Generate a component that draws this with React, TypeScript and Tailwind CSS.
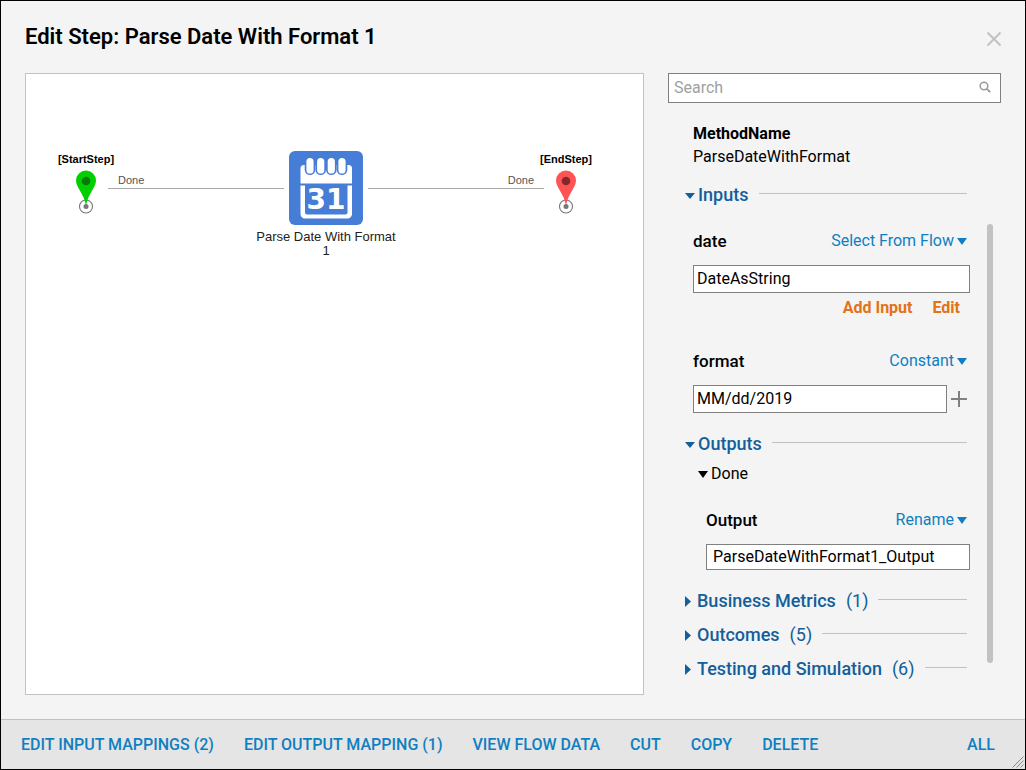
import { useState } from "react";
import type { ReactNode } from "react";

const footerActions = [
  "EDIT INPUT MAPPINGS (2)",
  "EDIT OUTPUT MAPPING (1)",
  "VIEW FLOW DATA",
  "CUT",
  "COPY",
  "DELETE",
];

function CaretDown({ className = "" }: { className?: string }) {
  return (
    <svg viewBox="0 0 10 6" preserveAspectRatio="none" className={`shrink-0 fill-current ${className}`} aria-hidden="true">
      <path d="M0 0h10L5 6z" />
    </svg>
  );
}

function CaretRight() {
  return (
    <svg viewBox="0 0 6 10" preserveAspectRatio="none" className="mr-[6px] h-[11px] w-[6px] shrink-0 fill-current" aria-hidden="true">
      <path d="M0 0v10L6 5z" />
    </svg>
  );
}

interface SectionProps {
  title: string;
  count?: number;
  open?: boolean;
}

function SectionHeader({ title, count, open = false }: SectionProps) {
  return (
    <div className="flex h-6 items-center pr-[3px]">
      <button type="button" aria-expanded={open} className="flex items-center text-lg leading-6 font-medium whitespace-nowrap text-[#135f9b]">
        {open ? <CaretDown className="mt-[2px] mr-[3px] h-[6px] w-[10px]" /> : <CaretRight />}
        {title}
        {count !== undefined && <span className="ml-[10px] font-normal">({count})</span>}
      </button>
      <span className="mb-[3px] ml-[10px] h-px flex-1 bg-[#c2c2c2]" />
    </div>
  );
}

function FieldHeader({ id, label, action }: { id: string; label: string; action: string }) {
  return (
    <div className="flex h-6 items-center justify-between pr-[3px]">
      <label htmlFor={id} className="text-[17px] leading-6 font-medium">{label}</label>
      <button type="button" className="flex items-center gap-[3px] text-[#0f7fc1]">
        {action}
        <CaretDown className="h-[7px] w-[10px]" />
      </button>
    </div>
  );
}

function Pin({ color, dot }: { color: string; dot: string }) {
  return (
    <svg width="22" height="44" viewBox="0 0 22 44" className="mt-[3px]" aria-hidden="true">
      <circle cx="11" cy="36.500" r="6.500" fill="none" stroke="#777" strokeWidth="1.100" />
      <path d="M11 0.500a10 10 0 0 0-10 10c0 3.600 1.800 6.500 4 10.200C7.800 25.500 9.600 29 10.600 34h0.800c1-5 2.800-8.500 5.600-13.300 2.200-3.700 4-6.600 4-10.200a10 10 0 0 0-10-10z" fill={color} />
      <circle cx="11" cy="11" r="4.300" fill={dot} />
      <circle cx="11" cy="36.500" r="2.500" fill="#777" />
    </svg>
  );
}

function CalendarIcon() {
  return (
    <svg width="74" height="74" viewBox="0 0 74 74" aria-hidden="true">
      <rect width="74" height="74" rx="6" fill="#467dd7" />
      <path d="M11.500 32.500V17.500a3.500 3.500 0 0 1 3.500-3.500h44.500a3.500 3.500 0 0 1 3.500 3.500v15z" fill="#fff" />
      <g fill="#467dd7">
        {[21, 31.700, 42.300, 53].map((x) => (
          <rect key={x} x={x - 5.300} y="5.500" width="10.600" height="18.500" rx="5.300" />
        ))}
      </g>
      <g fill="#fff">
        {[21, 31.700, 42.300, 53].map((x) => (
          <rect key={x} x={x - 3.600} y="7" width="7.200" height="15.500" rx="3.600" />
        ))}
      </g>
      <path d="M11.500 34.500h51.500v28.500a4.500 4.500 0 0 1-4.500 4.500H16a4.500 4.500 0 0 1-4.500-4.500zM16 34.500v27a2 2 0 0 0 2 2h38.500a2 2 0 0 0 2-2v-27z" fill="#fff" fillRule="evenodd" />
      <text x="37" y="58" textAnchor="middle" fontFamily="DejaVu Sans, sans-serif" fontWeight="bold" fontSize="28" fill="#fff">31</text>
    </svg>
  );
}

function FlowCanvas() {
  return (
    <div className="relative min-w-0 flex-1 border border-[#c2c2c2] bg-white font-['Liberation_Sans',sans-serif]">
      <div className="absolute top-[78px] left-[20px] flex w-20 flex-col items-center">
        <span className="text-[11px] leading-[15px] font-bold">[StartStep]</span>
        <Pin color="#00cf00" dot="#087a08" />
      </div>
      <div className="absolute top-[98px] left-[82px] w-44 border-b border-[#a9a9a9] pl-[10px] text-[11px] leading-4 text-[#555]">
        Done
      </div>
      <div className="absolute top-[77px] left-[220px] flex w-40 flex-col items-center">
        <CalendarIcon />
        <span className="mt-[5px] w-[150px] text-center text-[13px] leading-[14px] text-[#222]">
          Parse Date With Format 1
        </span>
      </div>
      <div className="absolute top-[98px] left-[342px] w-44 border-b border-[#a9a9a9] pr-[10px] text-right text-[11px] leading-4 text-[#555]">
        Done
      </div>
      <div className="absolute top-[78px] left-[500px] flex w-20 flex-col items-center">
        <span className="text-[11px] leading-[15px] font-bold">[EndStep]</span>
        <Pin color="#ff5454" dot="#852828" />
      </div>
    </div>
  );
}

function TextField({ id, value, onChange, className }: { id: string; value: string; onChange: (v: string) => void; className: string }) {
  return (
    <input
      id={id}
      type="text"
      value={value}
      onChange={(e) => onChange(e.target.value)}
      className={`min-w-0 border border-[#808080] bg-white pb-[2px] outline-none ${className}`}
    />
  );
}

function Indent({ children }: { children: ReactNode }) {
  return <div className="pl-2">{children}</div>;
}

function PropertiesPanel() {
  const [search, setSearch] = useState("");
  const [date, setDate] = useState("DateAsString");
  const [format, setFormat] = useState("MM/dd/2019");
  const [output, setOutput] = useState("ParseDateWithFormat1_Output");

  return (
    <aside className="w-[333px] shrink-0">
      <div className="flex h-[30px] items-center border border-[#808080] bg-white pr-[9px] pl-[5px]">
        <input
          type="search"
          aria-label="Search"
          placeholder="Search"
          value={search}
          onChange={(e) => setSearch(e.target.value)}
          className="min-w-0 flex-1 outline-none placeholder:text-[#a0a0a0]"
        />
        <svg width="12" height="12" viewBox="0 0 12 12" fill="none" stroke="#999" strokeWidth="1.500" className="mb-[2px]" aria-hidden="true">
          <circle cx="5" cy="5" r="3.800" />
          <path d="M7.800 7.800l3.400 3.400" strokeWidth="1.800" />
        </svg>
      </div>

      <div className="flex gap-[17px] pt-[19px] pr-2 pl-[17px]">
        <div className="min-w-0 flex-1">
          <Indent>
            <div className="leading-[23px]">
              <div className="font-bold">MethodName</div>
              <div>ParseDateWithFormat</div>
            </div>
          </Indent>

          <div className="mt-[15px]">
            <SectionHeader title="Inputs" open />
          </div>
          <Indent>
            <div className="mt-[22px]">
              <FieldHeader id="date" label="date" action="Select From Flow" />
              <TextField id="date" value={date} onChange={setDate} className="mt-3 block h-7 w-full px-[3px]" />
              <div className="mt-[3px] flex justify-end gap-5 pr-[10px] font-bold text-[#e27317]">
                <button type="button">Add Input</button>
                <button type="button">Edit</button>
              </div>
            </div>
            <div className="mt-[29px]">
              <FieldHeader id="format" label="format" action="Constant" />
              <div className="mt-3 flex items-center gap-1">
                <TextField id="format" value={format} onChange={setFormat} className="h-7 flex-1 px-[3px]" />
                <button type="button" aria-label="Add format" className="mr-[3px]">
                  <svg width="16" height="16" viewBox="0 0 16 16" stroke="#808080" strokeWidth="2" aria-hidden="true">
                    <path d="M8 0v16M0 8h16" />
                  </svg>
                </button>
              </div>
            </div>
          </Indent>

          <div className="mt-[19px]">
            <SectionHeader title="Outputs" open />
          </div>
          <div className="mt-[6px] pl-[13px]">
            <button type="button" aria-expanded className="flex items-center gap-[3px]">
              <CaretDown className="h-[7px] w-[10px]" />
              Done
            </button>
          </div>
          <div className="mt-[22px] pl-[21px]">
            <FieldHeader id="output" label="Output" action="Rename" />
            <TextField id="output" value={output} onChange={setOutput} className="mt-3 block h-[26px] w-full px-[6px]" />
          </div>

          <div className="mt-[19px] flex flex-col gap-[10px]">
            <SectionHeader title="Business Metrics" count={1} />
            <SectionHeader title="Outcomes" count={5} />
            <SectionHeader title="Testing and Simulation" count={6} />
          </div>
        </div>
        <div className="mt-[102px] mb-[18px] w-[6px] rounded-full bg-[#c2c2c2]" />
      </div>
    </aside>
  );
}

export default function App() {
  return (
    <div className="flex min-h-screen flex-col border border-black bg-[#f4f4f4] font-[Roboto,sans-serif] text-base text-black">
      <header className="flex h-[72px] items-center justify-between px-6">
        <h1 className="text-[22px] leading-7 font-semibold">Edit Step: Parse Date With Format 1</h1>
        <button type="button" aria-label="Close" className="mt-1">
          <svg width="14" height="14" viewBox="0 0 14 14" stroke="#c2c2c2" strokeWidth="2" aria-hidden="true">
            <path d="M0.500 0.500l13 13M13.500 0.500l-13 13" />
          </svg>
        </button>
      </header>

      <main className="flex flex-1 gap-6 px-6 pb-6">
        <FlowCanvas />
        <PropertiesPanel />
      </main>

      <footer className="relative flex h-[50px] items-center gap-[30px] border-t border-[#c2c2c2] bg-[#e5e5e5] pr-[30px] pl-5 font-medium text-[#0f7fc1]">
        {footerActions.map((label) => (
          <button key={label} type="button">{label}</button>
        ))}
        <button type="button" className="ml-auto">ALL</button>
        <svg width="12" height="12" viewBox="0 0 12 12" stroke="#888" className="absolute right-[1px] bottom-[1px]" aria-hidden="true">
          <path d="M0.500 11.500l11-11M4.500 11.500l7-7M8.500 11.500l3-3" />
        </svg>
      </footer>
    </div>
  );
}
